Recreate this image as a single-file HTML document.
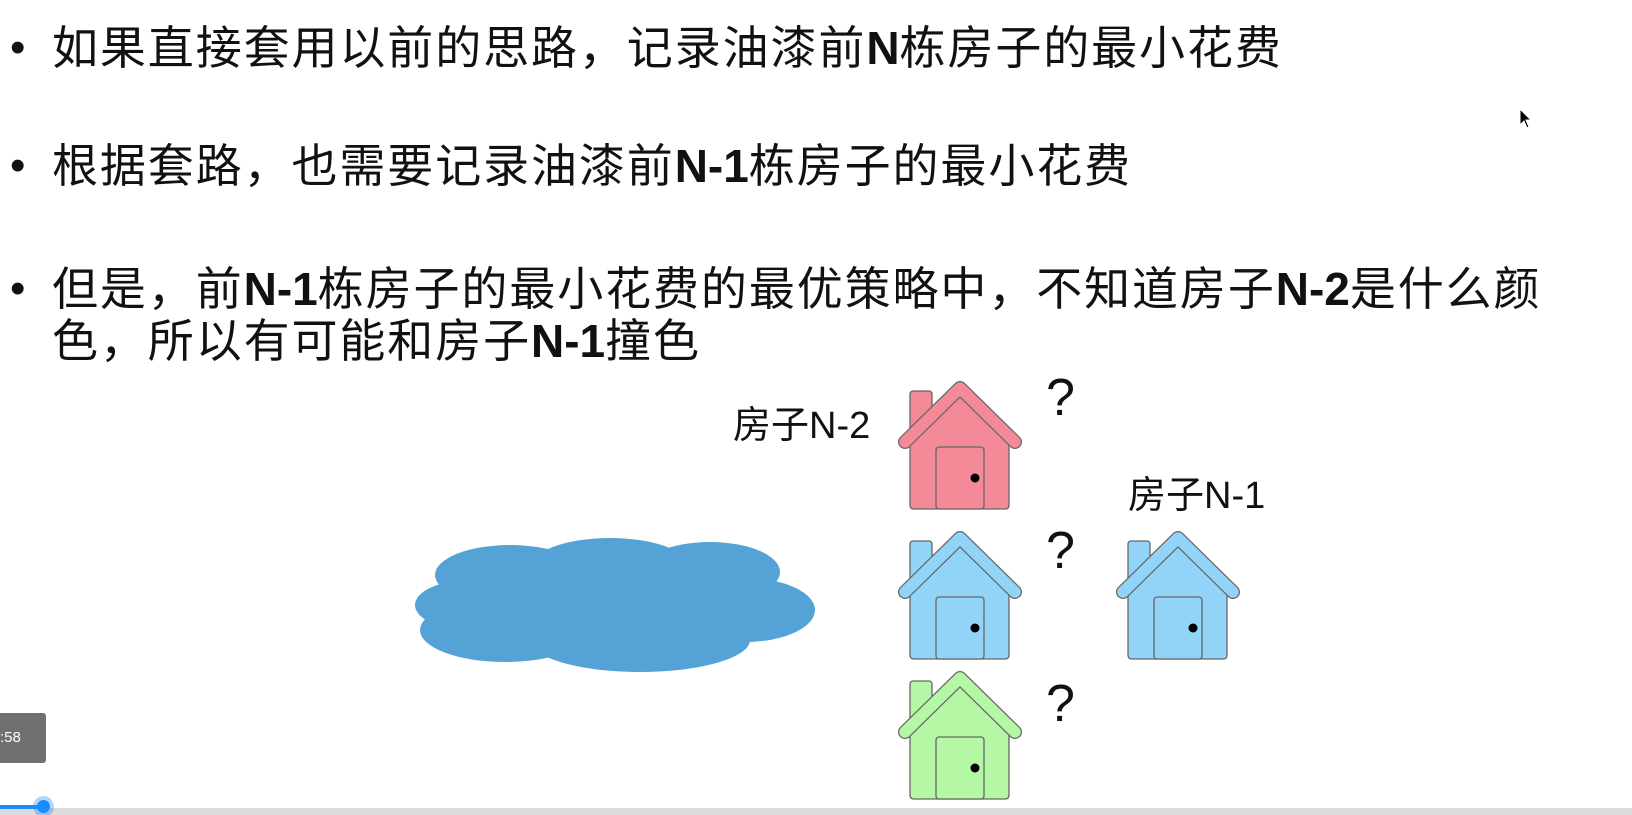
<!DOCTYPE html>
<html><head><meta charset="utf-8"><style>
html,body{margin:0;padding:0;background:#fff;width:1632px;height:815px;overflow:hidden;position:relative;font-family:"Liberation Sans","Noto Sans CJK SC",sans-serif;color:#111}
.l{position:absolute;left:52px;font-size:46px;line-height:52px;white-space:nowrap;letter-spacing:1.9px}
.l b{font-weight:bold;letter-spacing:0}
.d{position:absolute;left:10px;font-size:44px;line-height:52px}
.lab{position:absolute;font-size:38px;white-space:nowrap}
.q{position:absolute;font-size:52px;color:#111}
svg.h{position:absolute;width:130px;height:132px}
</style></head><body>
<div class="d" style="top:22px">•</div>
<div class="l" style="top:22px">如果直接套用以前的思路，记录油漆前<b>N</b>栋房子的最小花费</div>
<div class="d" style="top:140px">•</div>
<div class="l" style="top:140px">根据套路，也需要记录油漆前<b>N-1</b>栋房子的最小花费</div>
<div class="d" style="top:263px">•</div>
<div class="l" style="top:263px">但是，前<b>N-1</b>栋房子的最小花费的最优策略中，不知道房子<b>N-2</b>是什么颜</div>
<div class="l" style="top:315px">色，所以有可能和房子<b>N-1</b>撞色</div>

<div class="lab" style="left:733px;top:394px">房子N-2</div>
<div class="lab" style="left:1128px;top:464px">房子N-1</div>

<svg style="position:absolute;left:410px;top:530px" width="410" height="150" viewBox="0 0 410 150">
<g fill="#55a3d6">
<ellipse cx="205" cy="75" rx="190" ry="40"/>
<ellipse cx="100" cy="45" rx="75" ry="30"/>
<ellipse cx="200" cy="38" rx="80" ry="30"/>
<ellipse cx="300" cy="42" rx="70" ry="30"/>
<ellipse cx="335" cy="80" rx="70" ry="32"/>
<ellipse cx="95" cy="100" rx="85" ry="32"/>
<ellipse cx="230" cy="110" rx="110" ry="32"/>
<ellipse cx="60" cy="75" rx="55" ry="25"/>
</g></svg>

<svg class="h" style="left:897px;top:380px" viewBox="0 0 130 132"><g fill="#f48a98" stroke="#666" stroke-width="1.3"><rect x="13" y="11" width="22" height="50" rx="3"/><path d="M13 60 L63 12 L112 60 L112 125 Q112 129 108 129 L17 129 Q13 129 13 125 Z"/></g><polyline points="8,62 63,8 118,62" fill="none" stroke="#666" stroke-width="14" stroke-linecap="round" stroke-linejoin="round"/><polyline points="8,62 63,8 118,62" fill="none" stroke="#f48a98" stroke-width="11.5" stroke-linecap="round" stroke-linejoin="round"/><rect x="39" y="67" width="48" height="62" rx="3" fill="#f48a98" stroke="#666" stroke-width="1.3"/><circle cx="78" cy="98" r="4.5" fill="#000"/></svg>

<svg class="h" style="left:897px;top:530px" viewBox="0 0 130 132"><g fill="#92d4f8" stroke="#666" stroke-width="1.3"><rect x="13" y="11" width="22" height="50" rx="3"/><path d="M13 60 L63 12 L112 60 L112 125 Q112 129 108 129 L17 129 Q13 129 13 125 Z"/></g><polyline points="8,62 63,8 118,62" fill="none" stroke="#666" stroke-width="14" stroke-linecap="round" stroke-linejoin="round"/><polyline points="8,62 63,8 118,62" fill="none" stroke="#92d4f8" stroke-width="11.5" stroke-linecap="round" stroke-linejoin="round"/><rect x="39" y="67" width="48" height="62" rx="3" fill="#92d4f8" stroke="#666" stroke-width="1.3"/><circle cx="78" cy="98" r="4.5" fill="#000"/></svg>

<svg class="h" style="left:1115px;top:530px" viewBox="0 0 130 132"><g fill="#92d4f8" stroke="#666" stroke-width="1.3"><rect x="13" y="11" width="22" height="50" rx="3"/><path d="M13 60 L63 12 L112 60 L112 125 Q112 129 108 129 L17 129 Q13 129 13 125 Z"/></g><polyline points="8,62 63,8 118,62" fill="none" stroke="#666" stroke-width="14" stroke-linecap="round" stroke-linejoin="round"/><polyline points="8,62 63,8 118,62" fill="none" stroke="#92d4f8" stroke-width="11.5" stroke-linecap="round" stroke-linejoin="round"/><rect x="39" y="67" width="48" height="62" rx="3" fill="#92d4f8" stroke="#666" stroke-width="1.3"/><circle cx="78" cy="98" r="4.5" fill="#000"/></svg>

<svg class="h" style="left:897px;top:670px" viewBox="0 0 130 132"><g fill="#b4f7a4" stroke="#666" stroke-width="1.3"><rect x="13" y="11" width="22" height="50" rx="3"/><path d="M13 60 L63 12 L112 60 L112 125 Q112 129 108 129 L17 129 Q13 129 13 125 Z"/></g><polyline points="8,62 63,8 118,62" fill="none" stroke="#666" stroke-width="14" stroke-linecap="round" stroke-linejoin="round"/><polyline points="8,62 63,8 118,62" fill="none" stroke="#b4f7a4" stroke-width="11.5" stroke-linecap="round" stroke-linejoin="round"/><rect x="39" y="67" width="48" height="62" rx="3" fill="#b4f7a4" stroke="#666" stroke-width="1.3"/><circle cx="78" cy="98" r="4.5" fill="#000"/></svg>

<div class="q" style="left:1046px;top:368px">?</div>
<div class="q" style="left:1046px;top:521px">?</div>
<div class="q" style="left:1046px;top:674px">?</div>

<svg style="position:absolute;left:1519px;top:108px" width="14" height="22" viewBox="0 0 14 22"><path d="M1 1 L1 17 L5 13 L8 20 L10 19 L7 12 L12 12 Z" fill="#000" stroke="#fff" stroke-width="1"/></svg>

<div style="position:absolute;left:0;top:713px;width:46px;height:50px;background:#707070;border-radius:0 3px 3px 0;color:#fff;font-size:15px;line-height:50px"><span style="position:absolute;left:0;">:58</span></div>

<div style="position:absolute;left:0;top:808px;width:1632px;height:7px;background:#dcdcdc"></div>
<div style="position:absolute;left:0;top:805px;width:43px;height:4px;background:#1a8cff"></div>
<div style="position:absolute;left:33px;top:796px;width:21px;height:21px;border-radius:50%;background:rgba(26,140,255,0.35)"></div>
<div style="position:absolute;left:37px;top:800px;width:13px;height:13px;border-radius:50%;background:#1a8cff"></div>
</body></html>
